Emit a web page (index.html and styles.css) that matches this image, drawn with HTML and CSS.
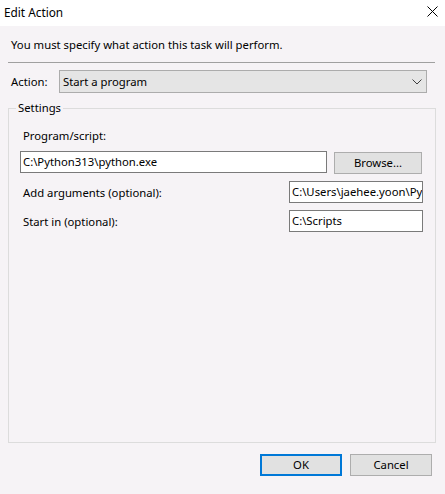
FILE: index.html
```html
<!DOCTYPE html>
<html>
<head>
<meta charset="utf-8">
<link rel="stylesheet" href="styles.css">
</head>
<body>
<div class="window">
  <div class="titlebar">
    <span class="title">Edit Action</span>
    <span class="close"><svg width="11" height="11" viewBox="0 0 11 11"><path d="M0.5 0.5 L10.5 10.5 M10.5 0.5 L0.5 10.5" stroke="#000" stroke-width="1" fill="none"/></svg></span>
  </div>
  <div class="content">
    <div class="instruction">You must specify what action this task will perform.</div>
    <div class="separator"></div>
    <div class="action-row">
      <span class="action-label">Action:</span>
      <div class="combo">
        <span class="combo-text">Start a program</span>
        <svg class="chevron" width="10" height="6" viewBox="0 0 10 6"><path d="M0.5 0.5 L5 5 L9.5 0.5" stroke="#404040" stroke-width="1" fill="none"/></svg>
      </div>
    </div>
    <fieldset class="group">
      <legend class="group-legend">Settings</legend>
      <div class="field-label program-label">Program/script:</div>
      <div class="program-row">
        <div class="textbox program-box">C:\Python313\python.exe</div>
        <div class="button browse">Browse...</div>
      </div>
      <div class="opt-row args-row">
        <span class="field-label">Add arguments (optional):</span>
        <div class="textbox opt-box">C:\Users\jaehee.yoon\Python</div>
      </div>
      <div class="opt-row start-row">
        <span class="field-label">Start in (optional):</span>
        <div class="textbox opt-box">C:\Scripts</div>
      </div>
    </fieldset>
    <div class="buttons">
      <div class="button ok">OK</div>
      <div class="button cancel">Cancel</div>
    </div>
  </div>
</div>
</body>
</html>
```
FILE: styles.css
```css
html, body {
  margin: 0;
  padding: 0;
}
body {
  width: 445px;
  height: 494px;
  background: #f6f3f6;
  font-family: "Noto Sans", "Open Sans", sans-serif;
  font-size: 11.3px;
  color: #000;
  overflow: hidden;
}
.window {
  width: 445px;
  height: 494px;
}
.titlebar {
  height: 26px;
  background: #ffffff;
  display: flex;
  align-items: center;
  justify-content: space-between;
  padding: 0 7px 0 4px;
  box-sizing: border-box;
}
.title {
  font-size: 11.8px;
  line-height: 16px;
  margin-top: -3px;
}
.close {
  display: flex;
  margin-top: -4px;
}
.content {
  padding: 0 10px 0 8px;
}
.instruction {
  padding-left: 3px;
  margin-top: 11px;
  line-height: 16px;
  height: 16px;
}
.separator {
  height: 1px;
  background: #a0a0a0;
  margin-top: 9px;
  width: 427px;
}
.action-row {
  display: flex;
  align-items: center;
  margin-top: 7px;
  height: 23px;
}
.action-label {
  width: 48px;
  padding-left: 3px;
  line-height: 16px;
}
.combo {
  box-sizing: border-box;
  width: 368px;
  height: 23px;
  background: #e5e5e5;
  border: 1px solid #acacac;
  display: flex;
  align-items: center;
  justify-content: space-between;
  padding: 0 4px 0 3px;
}
.combo-text {
  line-height: 16px;
}
.chevron {
  display: block;
}
.group {
  box-sizing: border-box;
  margin: 7px 0 0 0;
  width: 428px;
  height: 343px;
  border: 1px solid #dcdcdc;
  padding: 0 12px 0 11px;
  min-width: 0;
}
.group-legend {
  padding: 0 2px;
  margin-left: -4px;
  line-height: 16px;
}
.field-label {
  line-height: 16px;
  padding-left: 3px;
}
.program-label {
  margin-top: 12px;
}
.program-row {
  display: flex;
  align-items: flex-start;
  margin-top: 7px;
}
.textbox {
  box-sizing: border-box;
  background: #ffffff;
  border: 1px solid #7a7a7a;
  height: 22px;
  line-height: 20px;
  padding: 0 2px 0 2px;
  white-space: nowrap;
  overflow: hidden;
}
.program-box {
  width: 307px;
}
.button {
  box-sizing: border-box;
  background: #e1e1e1;
  border: 1px solid #adadad;
  display: flex;
  align-items: center;
  justify-content: center;
  line-height: 16px;
}
.browse {
  width: 88px;
  height: 22px;
  margin-left: 7px;
  margin-top: 1px;
}
.opt-row {
  display: flex;
  justify-content: space-between;
  align-items: center;
}
.args-row {
  margin-top: 7px;
}
.start-row {
  margin-top: 7px;
}
.opt-row .field-label {
  margin-top: 2px;
}
.opt-box {
  width: 134px;
}
.buttons {
  display: flex;
  justify-content: flex-end;
  gap: 8px;
  margin-top: 11px;
  padding-right: 3px;
}
.ok, .cancel {
  width: 82px;
  height: 22px;
}
.ok {
  border: 2px solid #0078d7;
}
```
